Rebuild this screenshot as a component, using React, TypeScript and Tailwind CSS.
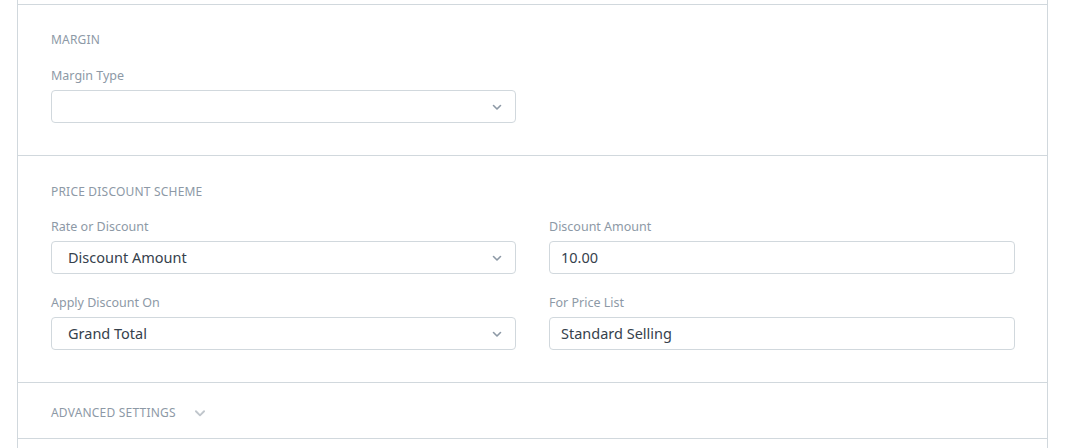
import React from "react";

const Chevron = ({ className = "", size = 12 }: { className?: string; size?: number }) => (
  <svg width={size} height={size} viewBox="0 0 12 12" className={className} fill="none">
    <path d="M2.5 4.5 L6 8 L9.5 4.5" stroke="currentColor" strokeWidth="1.6" strokeLinecap="round" strokeLinejoin="round" />
  </svg>
);

const Label = ({ children }: { children: React.ReactNode }) => (
  <div className="text-[12.5px] leading-[16px] text-[#8d99a6] mb-[6px]">{children}</div>
);

const Select = ({ value }: { value?: string }) => (
  <div className="h-[33px] w-full rounded-[4px] border border-[#d1d8dd] bg-white flex items-center justify-between pl-[16px] pr-[12px]">
    <span className="text-[14.5px] text-[#36414c]">{value ?? ""}</span>
    <Chevron className="text-[#8d99a6]" />
  </div>
);

const Input = ({ value }: { value: string }) => (
  <div className="h-[33px] w-full rounded-[4px] border border-[#d1d8dd] bg-white flex items-center pl-[11px]">
    <span className="text-[14.5px] text-[#36414c]">{value}</span>
  </div>
);

const Header = ({ children }: { children: React.ReactNode }) => (
  <div className="text-[12px] leading-[16px] uppercase text-[#8d99a6] tracking-[0.2px]">{children}</div>
);

export default function App() {
  return (
    <div
      className="w-[1070px] h-[448px] bg-white overflow-hidden"
      style={{ fontFamily: '"Noto Sans", "Open Sans", sans-serif' }}
    >
      <div className="ml-[17px] w-[1031px] h-full border-x border-[#d1d8dd] pt-[4px]">
        <div className="border-t border-[#d1d8dd]" />
        {/* Margin */}
        <div className="h-[151px] border-b border-[#d1d8dd] pl-[33px] pr-[32px] pt-[27px]">
          <Header>Margin</Header>
          <div className="mt-[20px]">
            <Label>Margin Type</Label>
            <div className="w-[465px]">
              <Select />
            </div>
          </div>
        </div>
        {/* Price discount */}
        <div className="h-[227px] border-b border-[#d1d8dd] pl-[33px] pr-[32px] pt-[28px]">
          <Header>Price Discount Scheme</Header>
          <div className="mt-[19px] grid grid-cols-[465px_466px] gap-x-[33px] gap-y-[21px]">
            <div>
              <Label>Rate or Discount</Label>
              <Select value="Discount Amount" />
            </div>
            <div>
              <Label>Discount Amount</Label>
              <Input value="10.00" />
            </div>
            <div>
              <Label>Apply Discount On</Label>
              <Select value="Grand Total" />
            </div>
            <div>
              <Label>For Price List</Label>
              <Input value="Standard Selling" />
            </div>
          </div>
        </div>
        {/* Advanced */}
        <div className="h-[56px] border-b border-[#d1d8dd] pl-[33px] pt-[4px] flex items-center gap-[17px]">
          <Header>Advanced Settings</Header>
          <Chevron size={14} className="text-[#c0c6cc]" />
        </div>
      </div>
    </div>
  );
}
